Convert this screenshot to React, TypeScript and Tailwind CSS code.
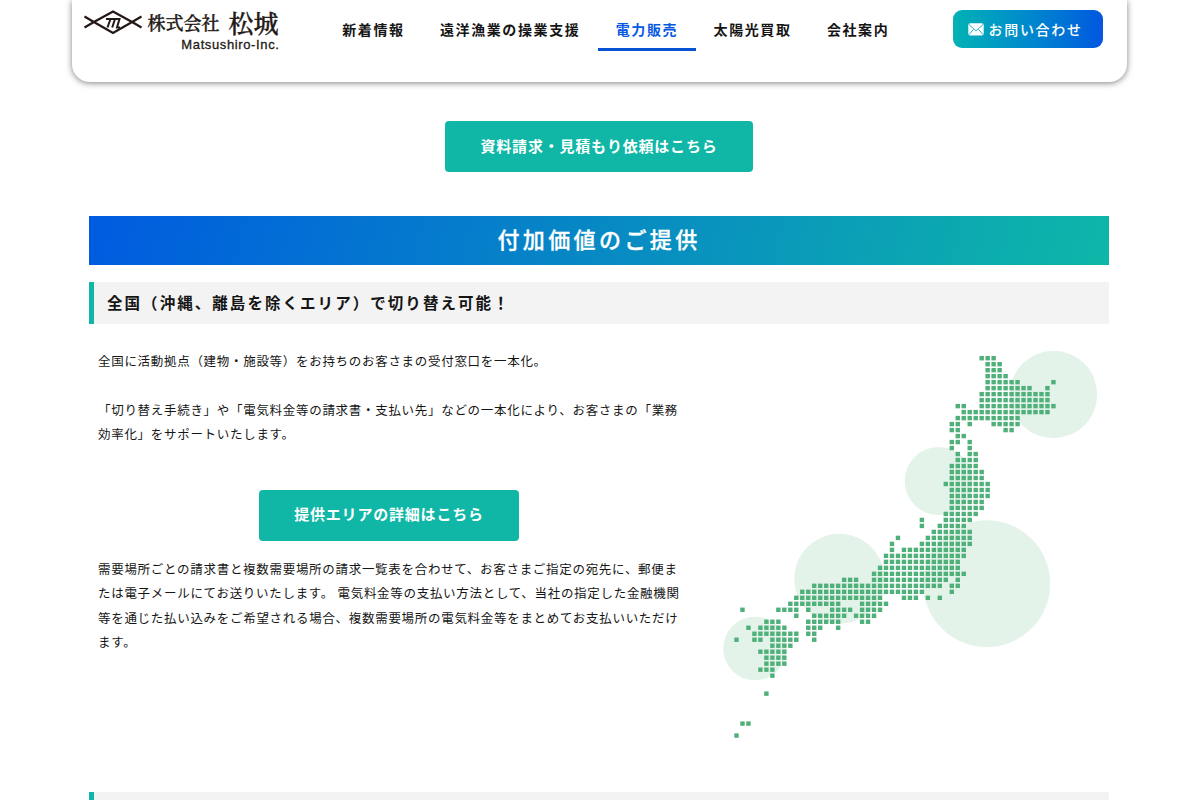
import React from "react";

const dotRows: Record<number, number[][]> = {
  0: [[41, 43]],
  1: [[42, 44]],
  2: [[42, 44]],
  3: [[42, 45]],
  4: [[42, 47], [53, 53]],
  5: [[42, 49], [52, 52]],
  6: [[41, 52]],
  7: [[41, 52]],
  8: [[37, 38], [41, 53]],
  9: [[38, 52]],
  10: [[37, 47]],
  11: [[36, 37], [39, 39], [43, 47]],
  12: [[36, 37], [45, 46]],
  13: [[37, 38]],
  14: [[36, 37], [39, 39]],
  15: [[36, 36], [39, 39]],
  16: [[37, 37], [39, 40]],
  17: [[37, 40]],
  18: [[36, 40]],
  19: [[36, 41]],
  20: [[36, 41]],
  21: [[35, 42]],
  22: [[36, 42]],
  23: [[36, 42]],
  24: [[36, 41]],
  25: [[36, 41]],
  26: [[35, 40]],
  27: [[31, 31], [35, 39]],
  28: [[31, 31], [34, 38]],
  29: [[33, 39]],
  30: [[27, 27], [32, 39]],
  31: [[26, 26], [31, 39]],
  32: [[26, 26], [28, 38]],
  33: [[25, 38]],
  34: [[25, 37]],
  35: [[24, 37]],
  36: [[23, 38]],
  37: [[18, 20], [23, 35], [37, 37]],
  38: [[13, 34], [36, 37]],
  39: [[11, 31], [36, 36]],
  40: [[10, 24], [28, 30], [32, 32], [34, 34]],
  41: [[9, 17], [21, 25]],
  42: [[1, 1], [7, 10], [12, 12], [16, 19], [21, 24]],
  43: [[10, 10], [13, 18], [20, 23]],
  44: [[5, 7], [12, 17], [21, 22]],
  45: [[2, 2], [4, 8], [12, 14], [17, 17]],
  46: [[3, 10], [12, 13]],
  47: [[0, 0], [3, 4], [6, 10], [13, 13]],
  48: [[6, 9]],
  49: [[4, 8]],
  50: [[5, 8]],
  51: [[5, 8]],
  52: [[4, 6]],
  53: [[6, 6]],
  56: [[5, 5]],
  61: [[1, 2]],
  63: [[0, 0]],
};

function JapanMap() {
  const dots: React.ReactNode[] = [];
  for (const [row, runs] of Object.entries(dotRows)) {
    for (const [from, to] of runs) {
      for (let c = from; c <= to; c++) {
        dots.push(
          <rect key={`${row}-${c}`} x={14.3 + c * 5.98} y={6 + Number(row) * 5.99} width="4.4" height="4.4" />
        );
      }
    }
  }
  return (
    <svg className="block h-[400px] w-[400px]" viewBox="0 0 400 400">
      <g fill="#e4f3ea">
        <circle cx="333.5" cy="44.5" r="43.7" />
        <circle cx="218.7" cy="131" r="34" />
        <circle cx="266.7" cy="233.7" r="63.5" />
        <circle cx="119.3" cy="228.8" r="45" />
        <circle cx="35" cy="298.5" r="31.8" />
      </g>
      <g fill="#4fb079">{dots}</g>
    </svg>
  );
}

function Logo() {
  return (
    <div className="mt-[9px] ml-3 flex h-[44px] w-[196px] shrink-0 text-[#231815]">
      <svg className="h-[26px] w-[58px] shrink-0" viewBox="0 0 58 26" fill="none" stroke="currentColor">
        <path d="M0.5 7.500 L9 12.500 L29 24 L49 12.500 L57.5 7.500 M0.5 18.500 L9 13.500 L29 2.500 L49 13.500 L57.5 18.500" strokeWidth="2.300" />
        <path d="M22 10 H35.500 L33 18.500 H36 M26.500 10 L23.500 18.500 M31 10 L28.200 18.500" strokeWidth="2" />
      </svg>
      <div className="ml-[5px] flex w-[133px] flex-col">
        <div className="flex h-[28px] items-start whitespace-nowrap pl-px font-['Noto_Serif_CJK_JP','Noto_Sans_CJK_JP',serif] leading-none [-webkit-text-stroke:0.4px_currentColor]">
          <span className="mt-[4px] text-[18px] font-medium">株式会社</span>
          <span className="mt-[1px] ml-[9px] text-[25px] font-medium">松城</span>
        </div>
        <div className="mt-[1px] ml-auto h-[14px] whitespace-nowrap font-['Liberation_Sans',sans-serif] text-[13px] leading-[13px] tracking-[0.62px] [-webkit-text-stroke:0.3px_currentColor]">
          Matsushiro-Inc.
        </div>
      </div>
    </div>
  );
}

const nav = [
  { label: "新着情報", active: false },
  { label: "遠洋漁業の操業支援", active: false },
  { label: "電力販売", active: true },
  { label: "太陽光買取", active: false },
  { label: "会社案内", active: false },
];

function Header() {
  return (
    <header className="mx-auto flex h-[82px] w-[1055px] -translate-x-[1px] items-start rounded-b-[18px] bg-white shadow-[0_1px_6px_rgba(0,0,0,0.5)]">
      <Logo />
      <nav className="ml-[45px] flex shrink-0">
        {nav.map((item) => (
          <a
            key={item.label}
            className={
              item.active
                ? "flex h-[51px] items-center whitespace-nowrap border-b-[3px] border-[#0752d2] px-[17.7px] pt-[10px] text-[14px] font-bold tracking-[1.6px] text-[#0759e4]"
                : "flex h-[51px] items-center whitespace-nowrap border-b-[3px] border-transparent px-[17.7px] pt-[10px] text-[14px] font-bold tracking-[1.6px]"
            }
          >
            {item.label}
          </a>
        ))}
      </nav>
      <a className="mt-[10px] mr-[24px] ml-auto flex h-[38px] w-[150px] shrink-0 items-center rounded-[9px] bg-linear-to-r from-[#08b2b4] to-[#0756df] pl-[15px] text-[14px] font-medium tracking-[1.7px] text-white">
        <svg className="mr-[5px] h-[13px] w-[16px]" viewBox="0 0 16 13">
          <rect x="0.300" y="0.300" width="15.400" height="12.300" rx="2" fill="white" />
          <path d="M1 1.500 L8 8 L15 1.500 M1 11.500 L5.500 6.500 M15 11.500 L10.500 6.500" fill="none" stroke="#08a4bb" strokeWidth="0.900" />
        </svg>
        お問い合わせ
      </a>
    </header>
  );
}

export default function App() {
  return (
    <div className="h-[800px] overflow-hidden bg-white font-['Noto_Sans_CJK_JP',sans-serif] text-[#151515]">
      <Header />
      <main className="ml-[89px] w-[1020px]">
        <a className="mx-auto mt-[39px] flex h-[51px] w-[308px] items-center justify-center rounded-[4px] bg-[#10b7a6] text-[15px] font-bold tracking-[0.8px] text-white">
          資料請求・見積もり依頼はこちら
        </a>
        <h2 className="mt-[44px] flex h-[49px] items-center justify-center bg-linear-[105deg,#005be0,#0eb7a8] pb-[5px] text-[22px] font-medium tracking-[3.4px] text-white [-webkit-text-stroke:0.3px_currentColor]">
          付加価値のご提供
        </h2>
        <h3 className="mt-[17px] flex h-[42px] items-center border-l-[5px] border-[#10b7a6] bg-[#f3f3f3] pb-px pl-[13px] text-[15.5px] font-bold tracking-[2.05px]">
          全国（沖縄、離島を除くエリア）で切り替え可能！
        </h3>
        <div className="flex h-[468px]">
          <div className="ml-[9px] w-[600px] shrink-0 pt-[25px] text-[12.5px] leading-[24.4px] tracking-[0.7px]">
            <p className="whitespace-nowrap">全国に活動拠点（建物・施設等）をお持ちのお客さまの受付窓口を一本化。</p>
            <p className="mt-[24.5px] whitespace-nowrap">
              「切り替え手続き」や「電気料金等の請求書・支払い先」などの一本化により、お客さまの「業務
              <br />
              効率化」をサポートいたします。
            </p>
            <a className="mt-[43.3px] ml-[161px] flex h-[51px] w-[260px] items-center justify-center rounded-[4px] bg-[#10b7a6] pb-[3px] text-[15px] font-bold tracking-[0.8px] text-white">
              提供エリアの詳細はこちら
            </a>
            <p className="mt-[16px] whitespace-nowrap">
              需要場所ごとの請求書と複数需要場所の請求一覧表を合わせて、お客さまご指定の宛先に、郵便ま
              <br />
              たは電子メールにてお送りいたします。 電気料金等の支払い方法として、当社の指定した金融機関
              <br />
              等を通じた払い込みをご希望される場合、複数需要場所の電気料金等をまとめてお支払いいただけ
              <br />
              ます。
            </p>
          </div>
          <div className="ml-[22px] pt-[26px]">
            <JapanMap />
          </div>
        </div>
        <div className="h-[42px] border-l-[5px] border-[#10b7a6] bg-[#f3f3f3]" />
      </main>
    </div>
  );
}
